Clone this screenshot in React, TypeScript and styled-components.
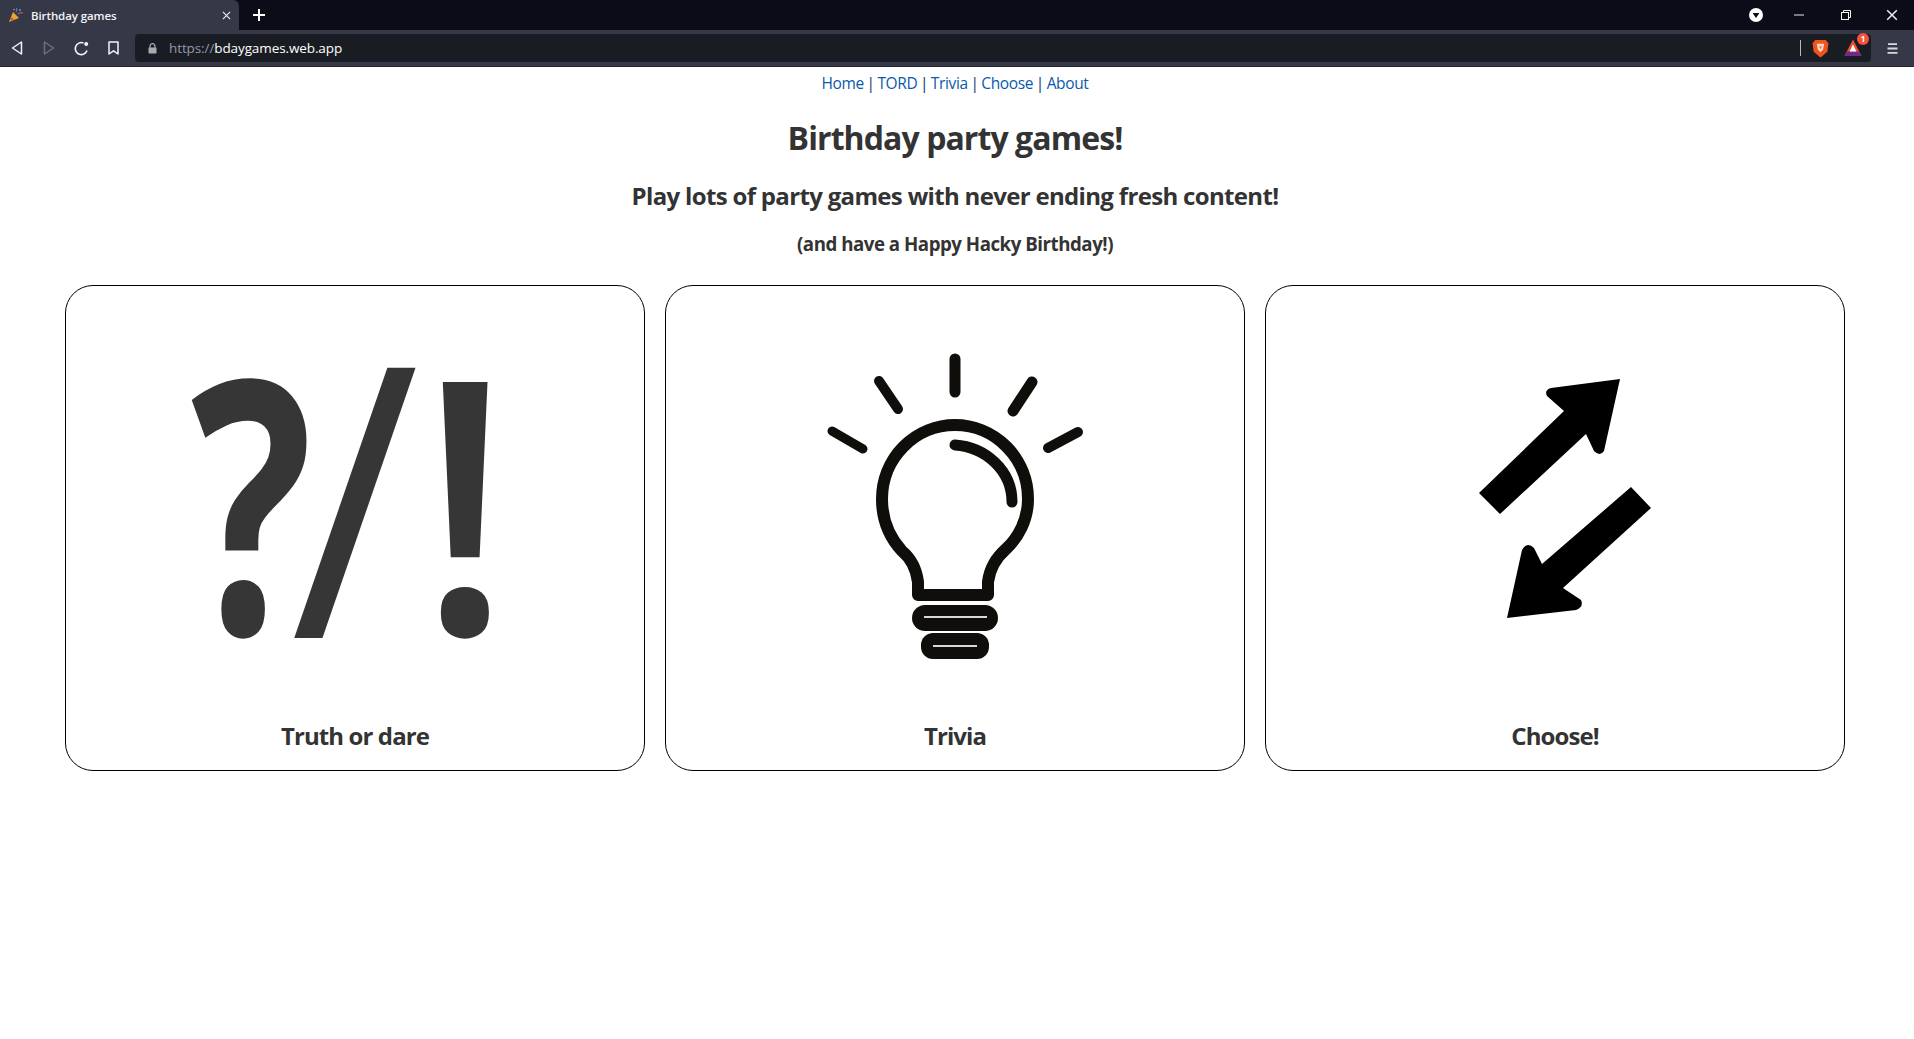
import React from 'react';
import styled, { createGlobalStyle } from 'styled-components';

const GlobalStyle = createGlobalStyle`
  html, body {
    margin: 0;
    padding: 0;
    background: #fff;
  }
  body {
    font-family: "Open Sans", "Noto Sans", sans-serif;
    color: #333;
  }
`;

const Window = styled.div`
  width: 1914px;
  height: 1039px;
  overflow: hidden;
  display: flex;
  flex-direction: column;
`;

const TabStrip = styled.div`
  height: 30px;
  background: #0b0c17;
  display: flex;
  align-items: center;
`;

const Tab = styled.div`
  width: 239px;
  height: 30px;
  background: #353846;
  border-top-right-radius: 6px;
  display: flex;
  align-items: center;
  padding-left: 8px;
  padding-right: 8px;
  box-sizing: border-box;
  gap: 7px;
`;

const TabTitle = styled.span`
  flex: 1;
  color: #f2f3f7;
  font-family: "Open Sans", sans-serif;
  font-size: 11.5px;
  font-weight: 600;
  letter-spacing: -0.1px;
`;

const Spacer = styled.div`
  flex: 1;
`;

const ChromeButton = styled.div<{ $w?: number }>`
  width: ${(p) => p.$w ?? 32}px;
  height: 30px;
  display: flex;
  align-items: center;
  justify-content: center;
  flex-shrink: 0;
`;

const Toolbar = styled.div`
  height: 37px;
  background: #353846;
  border-bottom: 1px solid #23252f;
  box-sizing: border-box;
  display: flex;
  align-items: center;
  padding-left: 1px;
`;

const UrlBar = styled.div`
  width: 1736px;
  height: 28px;
  margin-left: 6px;
  border-radius: 4px;
  background: #1a1c24;
  display: flex;
  align-items: center;
  padding-left: 13px;
  box-sizing: border-box;
`;

const UrlText = styled.div`
  margin-left: 12px;
  font-family: "Open Sans", sans-serif;
  font-size: 13.5px;
  letter-spacing: -0.1px;
  color: #8f9aa6;
  flex: 1;
  b {
    font-weight: 400;
    color: #fff;
  }
`;

const Divider = styled.div`
  width: 1px;
  height: 16px;
  background: #b8bac0;
  margin-right: 4px;
`;

const Page = styled.main`
  width: 1910px;
  display: flex;
  flex-direction: column;
  align-items: center;
`;

const Nav = styled.nav`
  height: 32px;
  display: flex;
  align-items: center;
  font-size: 15.5px;
  letter-spacing: -0.36px;
  word-spacing: -1px;
  color: #0b3a6e;
  white-space: pre;
`;

const NavLink = styled.a`
  color: #0a5aa8;
  text-decoration: none;
`;

const Title = styled.h1`
  margin: 19px 0 0;
  font-size: 32px;
  line-height: 40px;
  font-weight: 700;
  letter-spacing: -0.92px;
`;

const Subtitle = styled.h2`
  margin: 23px 0 0;
  font-size: 24px;
  line-height: 30px;
  font-weight: 700;
  letter-spacing: -0.67px;
`;

const Note = styled.h3`
  margin: 20px 0 0;
  font-size: 18.7px;
  line-height: 26px;
  font-weight: 700;
  letter-spacing: -0.48px;
`;

const CardRow = styled.div`
  margin-top: 28px;
  display: flex;
  gap: 20px;
`;

const Card = styled.a`
  width: 580px;
  height: 486px;
  box-sizing: border-box;
  border: 1px solid #000;
  border-radius: 28px;
  display: flex;
  flex-direction: column;
  align-items: center;
  padding-top: 40px;
  color: #333;
  text-decoration: none;
`;

const CardArt = styled.svg`
  width: 400px;
  height: 360px;
  display: block;
  overflow: visible;
`;

const CardLabel = styled.h3`
  margin: 34px 0 0;
  font-size: 24px;
  line-height: 32px;
  font-weight: 700;
  letter-spacing: -0.9px;
`;

const GlyphText = styled.text<{ $weight: number }>`
  font-family: "Open Sans", sans-serif;
  font-size: 364px;
  font-weight: ${(p) => p.$weight};
  fill: #363636;
`;

const PartyIcon = () => (
  <svg width="16" height="16" viewBox="0 0 16 16">
    <path d="M1 15 L5 5 L11 11 Z" fill="#e8a33a" />
    <path d="M3.2 10 L6 12.6 L3.6 13.6 L2.3 12.4 Z" fill="#c9571f" />
    <path d="M8 5 C9 3 9 2 8.5 1" stroke="#3f7fd0" strokeWidth="1.2" fill="none" />
    <path d="M10 7 C12 5 13 5 15 6" stroke="#d04a7a" strokeWidth="1.2" fill="none" />
    <circle cx="12" cy="3" r="1" fill="#4aa3d0" />
    <circle cx="6" cy="2.5" r="0.8" fill="#d0a14a" />
  </svg>
);

const CloseIcon = ({ size = 9, color = '#e8e9ee' }: { size?: number; color?: string }) => (
  <svg width={size} height={size} viewBox="0 0 10 10">
    <path d="M1 1 L9 9 M9 1 L1 9" stroke={color} strokeWidth="1.3" fill="none" />
  </svg>
);

const PlusIcon = () => (
  <svg width="12" height="12" viewBox="0 0 12 12">
    <path d="M6 0 V12 M0 6 H12" stroke="#fff" strokeWidth="2" fill="none" />
  </svg>
);

const ProfileIcon = () => (
  <svg width="14" height="14" viewBox="0 0 14 14">
    <circle cx="7" cy="7" r="7" fill="#fff" />
    <path d="M3.6 5 H10.4 L7 10 Z" fill="#0b0c17" />
  </svg>
);

const MinimizeIcon = () => (
  <svg width="10" height="10" viewBox="0 0 10 10">
    <path d="M0 5 H10" stroke="#e8e9ee" strokeWidth="1" fill="none" />
  </svg>
);

const RestoreIcon = () => (
  <svg width="10" height="10" viewBox="0 0 10 10">
    <rect x="0.5" y="2.5" width="7" height="7" fill="none" stroke="#f2f2f2" />
    <path d="M2.5 2.5 V0.5 H9.5 V7.5 H7.5" fill="none" stroke="#f2f2f2" />
  </svg>
);

const BackIcon = () => (
  <svg width="12" height="14" viewBox="0 0 12 14">
    <path d="M10.5 1 L1.5 7 L10.5 13 Z" fill="none" stroke="#f2f3f7" strokeWidth="1.5" strokeLinejoin="round" />
  </svg>
);

const ForwardIcon = () => (
  <svg width="12" height="14" viewBox="0 0 12 14">
    <path d="M1.5 1 L10.5 7 L1.5 13 Z" fill="none" stroke="#6d7080" strokeWidth="1.5" strokeLinejoin="round" />
  </svg>
);

const ReloadIcon = () => (
  <svg width="15" height="15" viewBox="0 0 15 15">
    <path d="M13 9.5 A6 6 0 1 1 9.5 2" fill="none" stroke="#f2f3f7" strokeWidth="1.6" />
    <circle cx="12.2" cy="3" r="2" fill="#f2f3f7" />
  </svg>
);

const BookmarkIcon = () => (
  <svg width="11" height="14" viewBox="0 0 11 14">
    <path d="M1 1 H10 V13 L5.5 9.8 L1 13 Z" fill="none" stroke="#f2f3f7" strokeWidth="1.5" strokeLinejoin="round" />
  </svg>
);

const LockIcon = () => (
  <svg width="9" height="11" viewBox="0 0 9 11">
    <path d="M2 5 V3.2 A2.5 2.5 0 0 1 7 3.2 V5" fill="none" stroke="#a9abb3" strokeWidth="1.2" />
    <rect x="0.5" y="4.6" width="8" height="6" rx="0.8" fill="#a9abb3" />
  </svg>
);

const BraveIcon = () => (
  <svg width="17" height="19" viewBox="0 0 16 18">
    <path d="M3 1 H13 L15.5 4 L14.5 12 L8 17.5 L1.5 12 L0.5 4 Z" fill="#f0541e" />
    <path d="M4.5 4.5 H11.5 L10.5 10 L8 12.5 L5.5 10 Z" fill="#f7d5c4" />
    <path d="M6.8 7 H9.2 L8 9.4 Z" fill="#f0541e" />
  </svg>
);

const BatWrap = styled.div`
  position: relative;
  width: 18px;
  height: 18px;
`;

const BatBadge = styled.span`
  position: absolute;
  top: -6px;
  right: -7px;
  width: 12px;
  height: 12px;
  border-radius: 50%;
  background: #f4533a;
  color: #fff;
  font-size: 8px;
  font-weight: 700;
  line-height: 12px;
  text-align: center;
`;

const BatIcon = () => (
  <BatWrap>
    <svg width="18" height="18" viewBox="0 0 18 18">
      <path d="M9 0.5 L17.5 17 H0.5 Z" fill="#f04e30" />
      <path d="M0.5 17 H17.5 L14.8 12.4 H3.2 Z" fill="#6d2a8c" />
      <path d="M9 5.5 L12.4 12.4 H5.6 Z" fill="#fff" />
    </svg>
    <BatBadge>1</BatBadge>
  </BatWrap>
);

const MenuIcon = () => (
  <svg width="11" height="11" viewBox="0 0 11 11">
    <path d="M1 1.2 H10 M0.5 5.5 H10.5 M0.5 9.8 H10.5" stroke="#d8d9de" strokeWidth="1.8" fill="none" />
  </svg>
);

const TruthArt = () => (
  <CardArt viewBox="155 326 400 360">
    <GlyphText $weight={700} transform="matrix(0.7 0 0 0.97 191 634)">?</GlyphText>
    <GlyphText $weight={600} transform="matrix(0.72 0 -0.09 1.04 292 638)">/</GlyphText>
    <GlyphText $weight={600} transform="matrix(0.92 0 0 0.97 419 634)">!</GlyphText>
  </CardArt>
);

const TriviaArt = () => (
  <CardArt viewBox="755 326 400 360">
    <g fill="none" stroke="#0f0e0b" strokeLinecap="round" strokeLinejoin="round">
      <path d="M955 359 V392" strokeWidth="11" />
      <path d="M879 381 L898 409" strokeWidth="10" />
      <path d="M1032 382 L1013 411" strokeWidth="11" />
      <path d="M832 431 L863 449" strokeWidth="9" />
      <path d="M1078 432 L1048 448" strokeWidth="10" />
      <path
        d="M918 595 V582 C916 566 908 556 902 551 C890 538 882 520 882 499 A73 74 0 0 1 1028 499 C1028 520 1018 538 1006 549 C998 556 990 566 988 582 V595 Z"
        strokeWidth="12"
      />
      <path d="M955 445 C985 447 1012 470 1012 502" strokeWidth="11" />
    </g>
    <rect x="912" y="605" width="86" height="26" rx="13" fill="#0f0e0b" />
    <rect x="924" y="616" width="63" height="2" fill="#d8d8d8" />
    <rect x="921" y="633" width="68" height="26" rx="12" fill="#0f0e0b" />
    <rect x="933" y="645" width="44" height="2" fill="#d8d8d8" />
  </CardArt>
);

const ChooseArt = () => (
  <CardArt viewBox="1355 326 400 360">
    <path
      d="M1620 379 L1551 388 Q1544 390 1547 396 L1564 411 L1479 493 L1500 514 L1586 434 L1594 451 Q1600 457 1604 451 Z"
      fill="#000"
    />
    <path
      d="M1507 618 L1576 610 Q1584 607 1581 600 L1563 588 L1651 508 L1631 487 L1542 564 L1534 548 Q1527 541 1522 550 Z"
      fill="#000"
    />
  </CardArt>
);

const App: React.FC = () => (
  <Window>
    <GlobalStyle />
    <TabStrip>
      <Tab>
        <PartyIcon />
        <TabTitle>Birthday games</TabTitle>
        <CloseIcon />
      </Tab>
      <ChromeButton $w={40}>
        <PlusIcon />
      </ChromeButton>
      <Spacer />
      <ChromeButton $w={40}>
        <ProfileIcon />
      </ChromeButton>
      <ChromeButton $w={46}>
        <MinimizeIcon />
      </ChromeButton>
      <ChromeButton $w={48}>
        <RestoreIcon />
      </ChromeButton>
      <ChromeButton $w={44}>
        <CloseIcon size={12} />
      </ChromeButton>
    </TabStrip>
    <Toolbar>
      <ChromeButton><BackIcon /></ChromeButton>
      <ChromeButton><ForwardIcon /></ChromeButton>
      <ChromeButton><ReloadIcon /></ChromeButton>
      <ChromeButton><BookmarkIcon /></ChromeButton>
      <UrlBar>
        <LockIcon />
        <UrlText>
          https://<b>bdaygames.web.app</b>
        </UrlText>
        <Divider />
        <ChromeButton $w={30}><BraveIcon /></ChromeButton>
        <ChromeButton $w={36}><BatIcon /></ChromeButton>
      </UrlBar>
      <ChromeButton $w={43}><MenuIcon /></ChromeButton>
    </Toolbar>
    <Page>
      <Nav>
        <NavLink>Home</NavLink> | <NavLink>TORD</NavLink> | <NavLink>Trivia</NavLink> | <NavLink>Choose</NavLink> | <NavLink>About</NavLink>
      </Nav>
      <Title>Birthday party games!</Title>
      <Subtitle>Play lots of party games with never ending fresh content!</Subtitle>
      <Note>(and have a Happy Hacky Birthday!)</Note>
      <CardRow>
        <Card>
          <TruthArt />
          <CardLabel>Truth or dare</CardLabel>
        </Card>
        <Card>
          <TriviaArt />
          <CardLabel>Trivia</CardLabel>
        </Card>
        <Card>
          <ChooseArt />
          <CardLabel>Choose!</CardLabel>
        </Card>
      </CardRow>
    </Page>
  </Window>
);

export default App;
